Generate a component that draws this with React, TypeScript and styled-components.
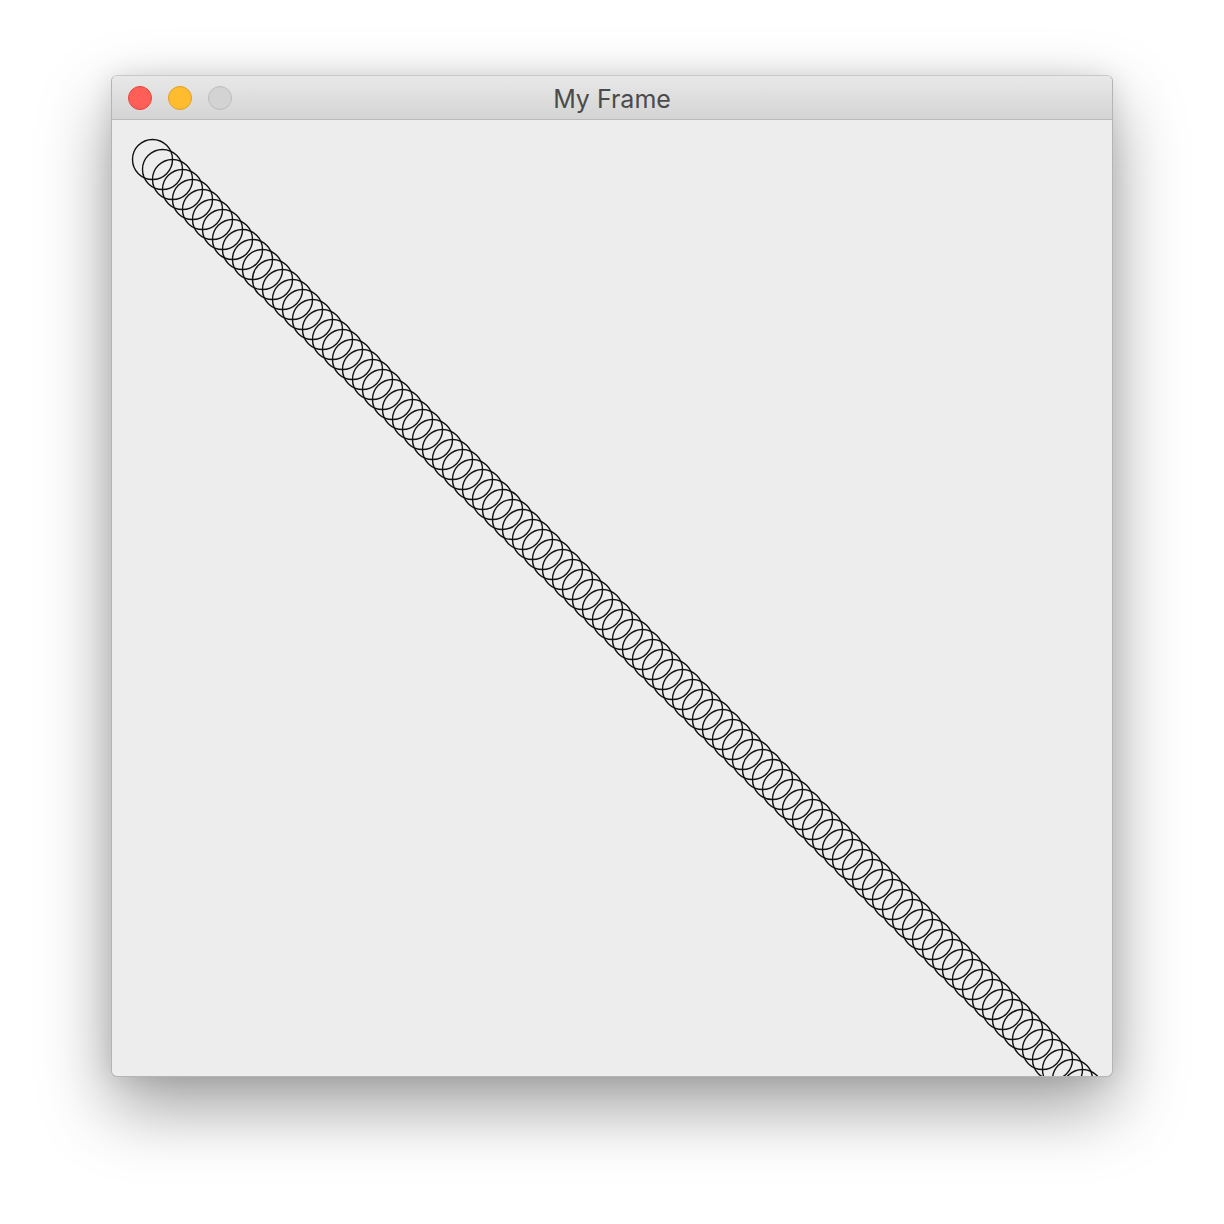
import React from 'react';
import styled, { createGlobalStyle } from 'styled-components';

const GlobalStyle = createGlobalStyle`
  html, body {
    margin: 0;
    padding: 0;
    background: #ffffff;
  }
`;

const Page = styled.div`
  width: 1224px;
  height: 1224px;
  box-sizing: border-box;
  padding: 75px 0 0 111px;
  background: #ffffff;
  overflow: hidden;
`;

const Window = styled.div`
  width: 1002px;
  height: 1002px;
  box-sizing: border-box;
  border: 1px solid #b4b4b4;
  border-top-color: #c8c8c8;
  border-radius: 6px;
  overflow: hidden;
  display: flex;
  flex-direction: column;
  background: #ededed;
  box-shadow: 0 30px 70px rgba(0, 0, 0, 0.38), 0 0 26px rgba(0, 0, 0, 0.1);
`;

const TitleBar = styled.div`
  height: 44px;
  flex: none;
  box-sizing: border-box;
  border-bottom: 1px solid #b9b9b9;
  background: linear-gradient(#e8e8e8, #d4d4d4);
  display: grid;
  grid-template-columns: 1fr auto 1fr;
  align-items: center;
`;

const Lights = styled.div`
  display: flex;
  gap: 16px;
  padding-left: 16px;
`;

const Light = styled.span<{ $fill: string; $edge: string }>`
  width: 24px;
  height: 24px;
  box-sizing: border-box;
  border-radius: 50%;
  background: ${p => p.$fill};
  border: 1px solid ${p => p.$edge};
`;

const Title = styled.div`
  font-family: Inter, "Open Sans", "Liberation Sans", sans-serif;
  font-size: 25px;
  color: #4b4b4b;
  padding-top: 3px;
`;

const Content = styled.div`
  flex: 1;
  overflow: hidden;
`;

const Canvas = styled.svg`
  display: block;
`;

const rings = Array.from({ length: 100 }, (_, i) => 39.5 + i * 10);

export default function App() {
  return (
    <Page>
      <GlobalStyle />
      <Window>
        <TitleBar>
          <Lights>
            <Light $fill="#ff5f57" $edge="#e2463f" />
            <Light $fill="#febc2e" $edge="#dfa123" />
            <Light $fill="#d3d3d3" $edge="#bdbdbd" />
          </Lights>
          <Title>My Frame</Title>
          <div />
        </TitleBar>
        <Content>
          <Canvas width="1000" height="956">
            {rings.map(c => (
              <circle key={c} cx={c + 1} cy={c} r={20} fill="none" stroke="#111" strokeWidth={1.4} />
            ))}
          </Canvas>
        </Content>
      </Window>
    </Page>
  );
}
